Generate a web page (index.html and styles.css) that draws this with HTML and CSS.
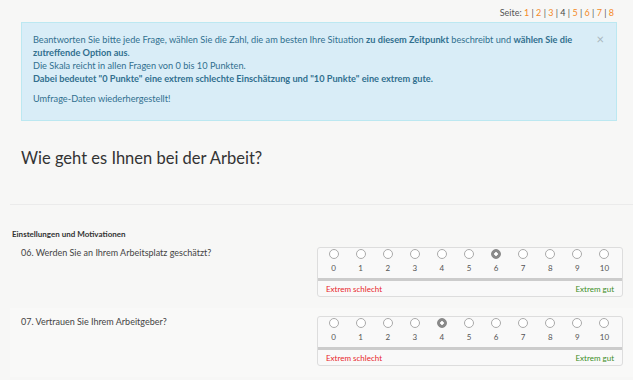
FILE: index.html
```html
<!DOCTYPE html>
<html lang="de">
  <head>
    <meta charset="UTF-8" />
    <title>Umfrage</title>
    <link rel="stylesheet" href="styles.css">
  </head>
  <body>
    <div class="page">
      <!-- Seitenauswahl -->
      <div class="pager">
        Seite:
        <a href="#">1</a> | <a href="#">2</a> | <a href="#">3</a> | <span class="current">4</span> |
        <a href="#">5</a> | <a href="#">6</a> | <a href="#">7</a> | <a href="#">8</a>
      </div>

      <!-- Hinweis -->
      <div class="alert">
        <span class="close">&times;</span>
        <p>
          Beantworten Sie bitte jede Frage, wählen Sie die Zahl, die am besten Ihre Situation <b>zu diesem Zeitpunkt</b> beschreibt und <b>wählen Sie die zutreffende Option aus</b>.<br>
          Die Skala reicht in allen Fragen von 0 bis 10 Punkten.<br>
          <b>Dabei bedeutet "0 Punkte" eine extrem schlechte Einschätzung und "10 Punkte" eine extrem gute.</b>
        </p>
        <p>Umfrage-Daten wiederhergestellt!</p>
      </div>

      <h1>Wie geht es Ihnen bei der Arbeit?</h1>

      <div class="section">
        <h4>Einstellungen und Motivationen</h4>

        <div class="question">
          <div class="q-text">06. Werden Sie an Ihrem Arbeitsplatz geschätzt?</div>
          <div class="scale" data-name="q06" data-value="6"></div>
        </div>

        <div class="question">
          <div class="q-text">07. Vertrauen Sie Ihrem Arbeitgeber?</div>
          <div class="scale" data-name="q07" data-value="4"></div>
        </div>
      </div>
    </div>

    <script>
      // Skala 0 bis 10 aufbauen
      document.querySelectorAll(".scale").forEach((scale) => {
        const name = scale.dataset.name;
        const value = Number(scale.dataset.value);
        let points = "";
        for (let i = 0; i <= 10; i++) {
          points += `
            <label class="point">
              <input type="radio" name="${name}" value="${i}" ${i === value ? "checked" : ""} />
              <span>${i}</span>
            </label>`;
        }
        scale.innerHTML = `
          <div class="points">${points}</div>
          <div class="legend">
            <span class="bad">Extrem schlecht</span>
            <span class="good">Extrem gut</span>
          </div>`;
      });
    </script>
  </body>
</html>
```

FILE: styles.css
```css
/* Grundlayout */
body {
  margin: 0;
  background: #fff;
  font-family: Lato, "Open Sans", sans-serif;
  color: #444;
}

.page {
  width: 633px;
  min-height: 380px;
  background: #f7f7f6;
  overflow: hidden;
}

/* Seitenauswahl */
.pager {
  text-align: right;
  font-size: 9px;
  line-height: 12px;
  color: #555;
  padding: 7px 19px 0 0;
  height: 15px;
}

.pager a {
  color: #f48a26;
  text-decoration: none;
}

.pager .current {
  color: #444;
}

/* Hinweisbox */
.alert {
  position: relative;
  margin: 0 16px 0 21px;
  padding: 10px 28px 15px 11px;
  background: #d9edf7;
  border: 1px solid #bce8f1;
  color: #31708f;
  font-size: 9.2px;
  line-height: 13px;
}

.alert p {
  margin: 0;
}

.alert p + p {
  margin-top: 7px;
}

.alert .close {
  position: absolute;
  top: 10px;
  right: 12px;
  font-size: 13px;
  color: #a9b7be;
}

h1 {
  margin: 26px 0 0 21px;
  font-size: 16.5px;
  font-weight: normal;
  line-height: 22px;
  color: #333;
}

/* Fragen */
.section {
  margin: 35px 0 0 10px;
  border-top: 1px solid #ebebeb;
}

.section h4 {
  margin: 24px 0 0 2px;
  font-size: 8px;
  line-height: 10px;
  font-weight: bold;
  color: #333;
}

.question {
  display: flex;
  justify-content: space-between;
  padding: 8px 0 11px;
}

.question + .question {
  background: #f9f9f8;
}

.q-text {
  padding: 0 0 0 11px;
  font-size: 9px;
  line-height: 12px;
}

.scale {
  width: 304px;
  margin-right: 10px;
  border: 1px solid #ddd;
  border-radius: 3px;
  background: #f9f9f9;
}

.points {
  display: grid;
  grid-template-columns: repeat(11, 1fr);
  padding: 1px 4px 5px 2px;
  border-bottom: 3px solid #ccc;
}

.point {
  display: flex;
  flex-direction: column;
  align-items: center;
  font-size: 8px;
  line-height: 10px;
  color: #555;
}

.point input {
  appearance: none;
  width: 10px;
  height: 10px;
  margin: 0 0 4px;
  border: 1px solid #aaa;
  border-radius: 50%;
  background: #fff;
}

.point input:checked {
  border-color: #888;
  background: radial-gradient(circle, #fff 0 1.5px, #8a8a8a 2px);
}

.legend {
  display: flex;
  justify-content: space-between;
  padding: 3px 8px 2px;
  font-size: 8px;
  line-height: 10px;
}

.bad {
  color: #e8262b;
}

.good {
  color: #3c8d1f;
}
```
